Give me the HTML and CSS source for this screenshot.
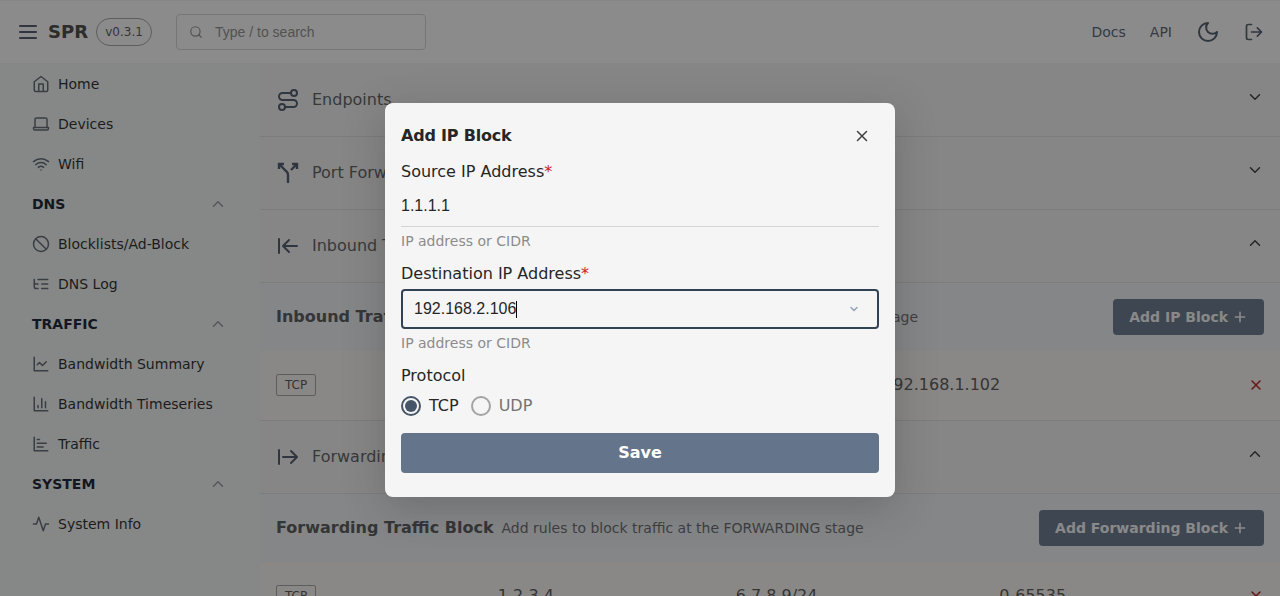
FILE: index.html
```html
<!DOCTYPE html>
<html lang="en">
<head>
<meta charset="utf-8">
<title>SPR</title>
<link rel="stylesheet" href="styles.css">
</head>
<body>
<div class="app">
  <header class="topbar">
    <svg class="icon burger" viewBox="0 0 18 14"><path d="M1 1h16M1 7h16M1 13h16"/></svg>
    <span class="brand">SPR</span>
    <span class="version">v0.3.1</span>
    <div class="search">
      <svg class="icon search-icon" viewBox="0 0 24 24"><circle cx="11" cy="11" r="8"/><path d="m21 21-4.3-4.3"/></svg>
      <span>Type / to search</span>
    </div>
    <nav class="toplinks">
      <a>Docs</a>
      <a>API</a>
      <svg class="icon s24" viewBox="0 0 24 24"><path d="M12 3a6 6 0 0 0 9 9 9 9 0 1 1-9-9Z"/></svg>
      <svg class="icon s20" viewBox="0 0 24 24"><path d="M9 21H5a2 2 0 0 1-2-2V5a2 2 0 0 1 2-2h4M16 17l5-5-5-5M21 12H9"/></svg>
    </nav>
  </header>
  <div class="body">
    <aside class="sidebar">
      <a class="item"><svg class="icon s18" viewBox="0 0 24 24"><path d="m3 9 9-7 9 7v11a2 2 0 0 1-2 2H5a2 2 0 0 1-2-2zM9 22V12h6v10"/></svg>Home</a>
      <a class="item"><svg class="icon s18" viewBox="0 0 24 24"><path d="M4 16V6a2 2 0 0 1 2-2h12a2 2 0 0 1 2 2v10M2 16.500h20v1.500a2 2 0 0 1-2 2H4a2 2 0 0 1-2-2z"/></svg>Devices</a>
      <a class="item"><svg class="icon s18" viewBox="0 0 24 24"><path d="M5 13a10 10 0 0 1 14 0M8.500 16.500a5 5 0 0 1 7 0M2 8.820a15 15 0 0 1 20 0M12 20h.01"/></svg>Wifi</a>
      <div class="group">DNS<svg class="icon s18" viewBox="0 0 24 24"><path d="m18 15-6-6-6 6"/></svg></div>
      <a class="item"><svg class="icon s18" viewBox="0 0 24 24"><circle cx="12" cy="12" r="10"/><path d="m4.900 4.900 14.200 14.200"/></svg>Blocklists/Ad-Block</a>
      <a class="item"><svg class="icon s18" viewBox="0 0 24 24"><path d="M21 12h-8M21 6H8M21 18h-8M3 6v4c0 1.100.9 2 2 2h3M3 10v6c0 1.100.9 2 2 2h3"/></svg>DNS Log</a>
      <div class="group">TRAFFIC<svg class="icon s18" viewBox="0 0 24 24"><path d="m18 15-6-6-6 6"/></svg></div>
      <a class="item"><svg class="icon s18" viewBox="0 0 24 24"><path d="M3 3v18h18M19 9l-5 5-4-4-3 3"/></svg>Bandwidth Summary</a>
      <a class="item"><svg class="icon s18" viewBox="0 0 24 24"><path d="M3 3v18h18M18 17V9M13 17V5M8 17v-3"/></svg>Bandwidth Timeseries</a>
      <a class="item"><svg class="icon s18" viewBox="0 0 24 24"><path d="M3 3v18h18M7 16h8M7 11h12M7 6h3"/></svg>Traffic</a>
      <div class="group">SYSTEM<svg class="icon s18" viewBox="0 0 24 24"><path d="m18 15-6-6-6 6"/></svg></div>
      <a class="item"><svg class="icon s18" viewBox="0 0 24 24"><path d="M22 12h-4l-3 9L9 3l-3 9H2"/></svg>System Info</a>
    </aside>
    <main class="content">
      <div class="panel">
        <svg class="icon s24" viewBox="0 0 24 24"><circle cx="6" cy="19" r="3"/><path d="M9 19h8.500a3.500 3.500 0 0 0 0-7h-11a3.500 3.500 0 0 1 0-7H15"/><circle cx="18" cy="5" r="3"/></svg>
        <span>Endpoints</span>
        <svg class="icon s18 toggle" viewBox="0 0 24 24"><path d="m6 9 6 6 6-6"/></svg>
      </div>
      <div class="panel">
        <svg class="icon s24 split" viewBox="0 0 24 24"><path d="M16 3h5v5M8 3H3v5M12 22v-8.300a4 4 0 0 0-1.172-2.872L3 3M15 9l6-6"/></svg>
        <span>Port Forwarding</span>
        <svg class="icon s18 toggle" viewBox="0 0 24 24"><path d="m6 9 6 6 6-6"/></svg>
      </div>
      <div class="panel">
        <svg class="icon s24" viewBox="0 0 24 24"><path d="M3 19V5M13 6l-6 6 6 6M7 12h14"/></svg>
        <span>Inbound Traffic Block</span>
        <svg class="icon s18 toggle" viewBox="0 0 24 24"><path d="m18 15-6-6-6 6"/></svg>
      </div>
      <div class="section inbound">
        <h2>Inbound Traffic Block</h2>
        <p>Add rules to block traffic at the PREROUTING stage</p>
        <button class="btn">Add IP Block<svg class="icon plus" viewBox="0 0 24 24"><path d="M12 5v14M5 12h14"/></svg></button>
      </div>
      <div class="rule">
        <span class="tag">TCP</span><span>1.2.3.4/8</span><span>192.168.1.102</span>
        <svg class="icon remove" viewBox="0 0 24 24"><path d="M18 6 6 18M6 6l12 12"/></svg>
      </div>
      <div class="panel">
        <svg class="icon s24" viewBox="0 0 24 24"><path d="M3 5v14M21 12H7M15 18l6-6-6-6"/></svg>
        <span>Forwarding Traffic Block</span>
        <svg class="icon s18 toggle" viewBox="0 0 24 24"><path d="m18 15-6-6-6 6"/></svg>
      </div>
      <div class="section">
        <h2>Forwarding Traffic Block</h2>
        <p>Add rules to block traffic at the FORWARDING stage</p>
        <button class="btn">Add Forwarding Block<svg class="icon plus" viewBox="0 0 24 24"><path d="M12 5v14M5 12h14"/></svg></button>
      </div>
      <div class="rule">
        <span class="tag">TCP</span><span>1.2.3.4</span><span>6.7.8.9/24</span><span>0-65535</span>
        <svg class="icon remove" viewBox="0 0 24 24"><path d="M18 6 6 18M6 6l12 12"/></svg>
      </div>
    </main>
  </div>
</div>
<div class="overlay">
  <div class="modal">
    <div class="modal-head">
      <h1>Add IP Block</h1>
      <svg class="icon s18" viewBox="0 0 24 24"><path d="M18 6 6 18M6 6l12 12"/></svg>
    </div>
    <label class="label">Source IP Address<b>*</b></label>
    <div class="underlined">1.1.1.1</div>
    <p class="help">IP address or CIDR</p>
    <label class="label second">Destination IP Address<b>*</b></label>
    <div class="combo">
      <span class="value">192.168.2.106</span><i class="caret"></i>
      <svg class="icon combo-arrow" viewBox="0 0 24 24"><path d="m6 9 6 6 6-6"/></svg>
    </div>
    <p class="help">IP address or CIDR</p>
    <label class="label second">Protocol</label>
    <div class="radios">
      <span class="radio on"></span><span class="on-text">TCP</span>
      <span class="radio"></span><span>UDP</span>
    </div>
    <button class="save">Save</button>
  </div>
</div>
</body>
</html>
```
FILE: styles.css
```css
* { box-sizing: border-box; }
body {
  margin: 0;
  height: 596px;
  overflow: hidden;
  font: 14px/20px "DejaVu Sans", sans-serif;
}
h1, h2, p { margin: 0; }
button { border: 0; font-family: inherit; }
.icon {
  flex: none;
  fill: none;
  stroke: currentColor;
  stroke-width: 2;
  stroke-linecap: round;
  stroke-linejoin: round;
}
.s18 { width: 18px; height: 18px; }
.s20 { width: 20px; height: 20px; }
.s24 { width: 24px; height: 24px; }

.app { height: 596px; overflow: hidden; }
.topbar {
  display: flex;
  align-items: center;
  height: 64px;
  padding: 0 16px 0 19px;
  background: #fff;
  border: solid #f5f5f5;
  border-width: 1px 0;
}
.burger { width: 18px; height: 14px; color: #475569; }
.brand { margin-left: 11px; font-size: 18px; font-weight: 700; color: #404040; }
.version {
  height: 28px;
  width: 56px;
  margin-left: 8px;
  border: 1px solid #a3a3a3;
  border-radius: 14px;
  font-size: 12px;
  line-height: 26px;
  text-align: center;
  color: #525252;
}
.search {
  display: flex;
  align-items: center;
  gap: 12px;
  width: 250px;
  height: 36px;
  margin-left: 24px;
  padding-left: 12px;
  border: 1px solid #d4d4d4;
  border-radius: 4px;
  font-family: "Liberation Sans", sans-serif;
  color: #8c8c8c;
}
.search-icon { width: 14px; height: 14px; color: #8c8c8c; }
.toplinks { display: flex; align-items: center; gap: 24px; margin-left: auto; color: #475569; }
.toplinks a { color: #525b6b; }

.body { display: flex; height: 532px; }
.sidebar {
  width: 260px;
  flex: none;
  background: #f5f9f7;
  border-right: 1px solid #f5f5f5;
}
.item, .group { display: flex; align-items: center; height: 40px; padding-left: 32px; }
.item { gap: 8px; color: #1f1f1f; }
.item .icon { color: #5b6472; }
.group { justify-content: space-between; padding-right: 32px; font-weight: 700; color: #0f172a; }
.group .icon { color: #94949c; }

.content { flex: 1; background: #f5f5f5; }
.panel {
  display: flex;
  align-items: center;
  gap: 12px;
  height: 73px;
  padding: 0 16px;
  border-bottom: 1px solid #e0e0e0;
  font-size: 16px;
  color: #595959;
}
.panel .icon { color: #475569; }
.panel .split { stroke-width: 2.4; stroke-linecap: butt; stroke-linejoin: miter; }
.panel .toggle { margin: 0 0 6px auto; color: #333; }
.section { display: flex; align-items: center; height: 68px; padding: 0 16px; background: #f1f5f9; }
.section h2 { font-size: 16px; color: #525252; }
.section p { margin-left: 8px; color: #666; }
.inbound h2 { width: 191px; white-space: nowrap; }
.inbound p { width: 443px; text-align: right; }
.btn {
  display: flex;
  align-items: center;
  gap: 4px;
  height: 36px;
  margin-left: auto;
  padding: 0 16px;
  border-radius: 4px;
  background: #64748b;
  font-size: 14px;
  font-weight: 700;
  color: #fafafa;
}
.plus { width: 16px; height: 16px; stroke-width: 2.4; }
.rule {
  display: flex;
  align-items: center;
  justify-content: space-between;
  height: 70px;
  padding: 0 16px 2px;
  background: #faf8f4;
  border-bottom: 1px solid #e0e0e0;
  font-size: 16px;
  color: #525252;
}
.tag {
  width: 40px;
  height: 22px;
  border: 1px solid #a3a3a3;
  border-radius: 2px;
  font-size: 12px;
  line-height: 20px;
  text-align: center;
}
.remove { width: 16px; height: 16px; stroke-width: 2.4; color: #b91c1c; }

.overlay {
  position: absolute;
  inset: 0;
  display: flex;
  justify-content: center;
  align-items: flex-start;
  padding-top: 103px;
  background: rgba(23, 23, 23, .5);
}
.modal {
  width: 510px;
  height: 394px;
  padding: 16px;
  border-radius: 8px;
  background: #f5f5f5;
  box-shadow: 0 10px 40px rgba(38, 38, 38, .25);
  font-size: 16px;
  color: #262626;
}
.modal-head { display: flex; align-items: center; justify-content: space-between; height: 33px; padding-right: 8px; }
.modal-head h1 { font-size: 16px; letter-spacing: -.2px; }
.modal-head .icon { color: #404040; }
.label { display: block; height: 24px; margin-top: 7px; line-height: 26px; }
.label.second { margin-top: 10px; }
.label b { font-weight: 400; color: #cc2222; }
.underlined {
  height: 44px;
  line-height: 45px;
  border-bottom: 1px solid #d4d4d4;
  font-family: "Liberation Sans", sans-serif;
}
.help { margin-top: 4px; font-size: 14px; color: #8c8c8c; }
.combo {
  display: flex;
  align-items: center;
  height: 40px;
  margin-top: 4px;
  padding: 0 17px 0 11px;
  border: 2px solid #334155;
  border-radius: 4px;
  font-family: "Liberation Sans", sans-serif;
}
.caret { width: 1px; height: 17px; background: #000; }
.combo-arrow { width: 12px; height: 12px; margin-left: auto; stroke-width: 3; color: #94a3b8; }
.radios { display: flex; align-items: center; height: 20px; margin-top: 9px; gap: 8px; color: #737373; }
.on-text { margin-right: 4px; color: #262626; }
.radio { display: grid; place-items: center; width: 20px; height: 20px; border: 2px solid #a3a3a3; border-radius: 50%; }
.radio.on { border-color: #475569; }
.radio.on::after { content: ""; width: 12px; height: 12px; border-radius: 50%; background: #475569; }
.save {
  width: 100%;
  height: 40px;
  margin-top: 17px;
  padding: 0 0 2px;
  border-radius: 4px;
  background: #64748b;
  font-size: 16px;
  font-weight: 700;
  color: #fff;
}
```
